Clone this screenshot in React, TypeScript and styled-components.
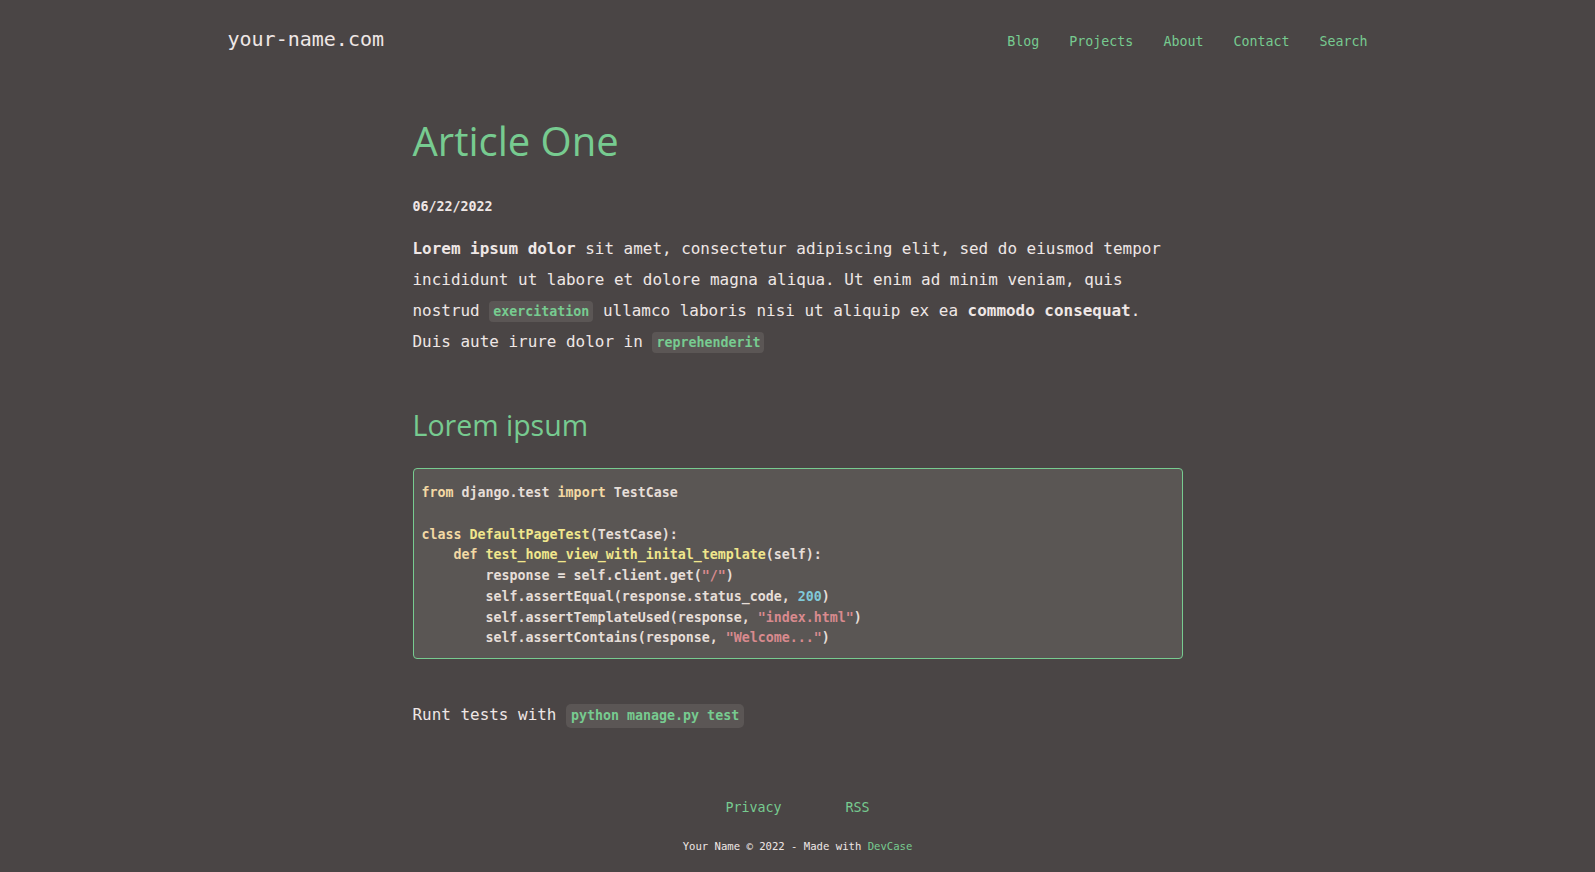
import React from "react";
import styled, { createGlobalStyle } from "styled-components";

const GREEN = "#77cb90";
const BG = "#4a4545";
const TEXT = "#efe7e5";
const MONO = `"DejaVu Sans Mono", "Liberation Mono", monospace`;
const SANS = `"Open Sans", "Noto Sans", sans-serif`;

const Global = createGlobalStyle`
  html, body { margin: 0; padding: 0; background: ${BG}; }
  body { color: ${TEXT}; font-family: ${MONO}; }
  * { box-sizing: border-box; }
`;

const Page = styled.div`
  min-height: 872px;
  display: flex;
  flex-direction: column;
`;

const Header = styled.header`
  width: 1140px;
  margin: 0 auto;
  display: flex;
  justify-content: space-between;
  align-items: center;
  padding: 16px 0 0;
  height: 66px;
`;

const Logo = styled.a`
  font-family: ${MONO};
  font-size: 20px;
  color: ${TEXT};
  text-decoration: none;
  margin-top: -4px;
`;

const Nav = styled.nav`
  display: flex;
  gap: 30px;
`;

const NavLink = styled.a`
  font-family: ${MONO};
  font-size: 13.3px;
  color: ${GREEN};
  text-decoration: none;
`;

const Article = styled.main`
  width: 770px;
  margin: 0 auto;
  padding-top: 51px;
`;

const Title = styled.h1`
  font-family: ${SANS};
  font-weight: 400;
  font-size: 40px;
  line-height: 48px;
  color: ${GREEN};
  margin: 0;
`;

const DateLine = styled.div`
  font-family: ${MONO};
  font-weight: 700;
  font-size: 13.3px;
  line-height: 20px;
  margin-top: 32px;
`;

const Para = styled.p<{ $top?: number }>`
  font-family: ${MONO};
  font-size: 15.95px;
  line-height: 31px;
  margin: ${(p) => p.$top ?? 0}px 0 0;
`;

const Strong = styled.strong`
  font-weight: 700;
`;

const InlineCode = styled.code<{ $large?: boolean }>`
  display: inline-block;
  font-family: ${MONO};
  font-weight: 700;
  font-size: 13.3px;
  line-height: ${(p) => (p.$large ? 24 : 21)}px;
  color: ${GREEN};
  background: #5b5655;
  border-radius: ${(p) => (p.$large ? 5 : 4)}px;
  padding: 0 ${(p) => (p.$large ? 5 : 4)}px;
`;

const H2 = styled.h2`
  font-family: ${SANS};
  font-weight: 400;
  font-size: 28.5px;
  line-height: 34px;
  color: ${GREEN};
  margin: 51px 0 0;
`;

const CodeBlock = styled.pre`
  margin: 26px 0 0;
  border: 1px solid ${GREEN};
  border-radius: 4px;
  background: #5a5654;
  padding: 14px 8px 9px;
  font-family: ${MONO};
  font-weight: 700;
  font-size: 13.3px;
  line-height: 20.75px;
  color: #e6ded8;
  white-space: pre;
  overflow: hidden;
`;

const Tok = styled.span<{ $k: "kw" | "fn" | "str" | "num" }>`
  color: ${(p) =>
    ({ kw: "#f3d9a4", fn: "#f0e68c", str: "#d88a8e", num: "#80c8d8" })[p.$k]};
`;

const Footer = styled.footer`
  margin-top: 68px;
  display: flex;
  flex-direction: column;
  align-items: center;
`;

const FooterLinks = styled.div`
  display: flex;
  gap: 64px;
`;

const FooterLink = styled.a`
  font-family: ${MONO};
  font-size: 13.3px;
  line-height: 20px;
  color: ${GREEN};
  text-decoration: none;
`;

const Copy = styled.div`
  margin-top: 20px;
  font-family: ${MONO};
  font-size: 10.6px;
  line-height: 16px;
  color: ${TEXT};
`;

const CopyLink = styled.a`
  color: ${GREEN};
  text-decoration: none;
`;

export default function App() {
  return (
    <Page>
      <Global />
      <Header>
        <Logo href="#">your-name.com</Logo>
        <Nav>
          <NavLink href="#">Blog</NavLink>
          <NavLink href="#">Projects</NavLink>
          <NavLink href="#">About</NavLink>
          <NavLink href="#">Contact</NavLink>
          <NavLink href="#">Search</NavLink>
        </Nav>
      </Header>
      <Article>
        <Title>Article One</Title>
        <DateLine>06/22/2022</DateLine>
        <Para $top={16}>
          <Strong>Lorem ipsum dolor</Strong> sit amet, consectetur adipiscing elit, sed do eiusmod tempor
          incididunt ut labore et dolore magna aliqua. Ut enim ad minim veniam, quis nostrud{" "}
          <InlineCode>exercitation</InlineCode> ullamco laboris nisi ut aliquip ex ea{" "}
          <Strong>commodo consequat</Strong>. Duis aute irure dolor in{" "}
          <InlineCode>reprehenderit</InlineCode>
        </Para>
        <H2>Lorem ipsum</H2>
        <CodeBlock>
          <Tok $k="kw">from</Tok> django.test <Tok $k="kw">import</Tok> TestCase{"\n"}
          {"\n"}
          <Tok $k="kw">class</Tok> <Tok $k="fn">DefaultPageTest</Tok>(TestCase):{"\n"}
          {"    "}<Tok $k="kw">def</Tok> <Tok $k="fn">test_home_view_with_inital_template</Tok>(self):{"\n"}
          {"        "}response = self.client.get(<Tok $k="str">"/"</Tok>){"\n"}
          {"        "}self.assertEqual(response.status_code, <Tok $k="num">200</Tok>){"\n"}
          {"        "}self.assertTemplateUsed(response, <Tok $k="str">"index.html"</Tok>){"\n"}
          {"        "}self.assertContains(response, <Tok $k="str">"Welcome..."</Tok>)
        </CodeBlock>
        <Para $top={40}>
          Runt tests with <InlineCode $large>python manage.py test</InlineCode>
        </Para>
      </Article>
      <Footer>
        <FooterLinks>
          <FooterLink href="#">Privacy</FooterLink>
          <FooterLink href="#">RSS</FooterLink>
        </FooterLinks>
        <Copy>
          Your Name © 2022 - Made with <CopyLink href="#">DevCase</CopyLink>
        </Copy>
      </Footer>
    </Page>
  );
}
